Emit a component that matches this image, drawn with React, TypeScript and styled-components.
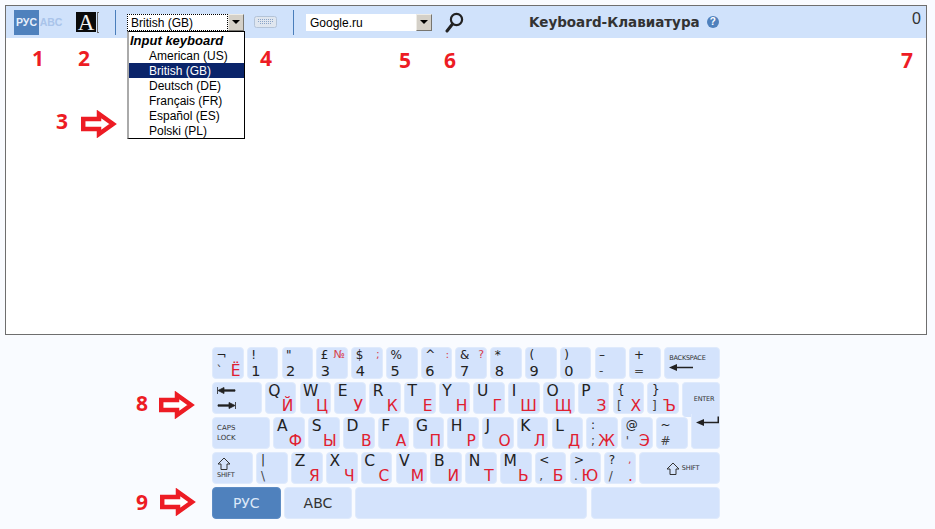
import React from "react";
import styled, { createGlobalStyle } from "styled-components";

const GlobalStyle = createGlobalStyle`
  html, body {
    margin: 0;
    padding: 0;
    background: #f9fbff;
    font-family: "Liberation Sans", Arial, sans-serif;
  }
`;

const Page = styled.div`
  position: relative;
  width: 935px;
  height: 529px;
  overflow: hidden;
  padding-top: 5px;
  box-sizing: border-box;
`;

const Panel = styled.div`
  margin-left: 5px;
  width: 922px;
  height: 330px;
  box-sizing: border-box;
  background: #fff;
  border: 1px solid #6e6e6e;
`;

const Toolbar = styled.div`
  display: flex;
  align-items: center;
  height: 32px;
  background: #d0e2fb;
  padding-left: 8px;
`;

const LangOn = styled.div`
  width: 25px;
  height: 25px;
  background: #4f81bd;
  color: #e8f0fb;
  font-size: 10.5px;
  font-weight: bold;
  display: flex;
  align-items: center;
  justify-content: center;
`;

const LangOff = styled.div`
  width: 24px;
  color: #a9c4ea;
  font-size: 10.5px;
  font-weight: bold;
  text-align: center;
`;

const FontIcon = styled.div`
  position: relative;
  flex: none;
  width: 20px;
  height: 20px;
  margin: 0 3px 0 13px;
  background: #0a0a0a;
  color: #f2f2f2;
  font-family: "Liberation Serif", serif;
  font-size: 23px;
  line-height: 22px;
  text-align: center;

  &::after {
    content: "";
    position: absolute;
    right: -3px;
    top: 0;
    width: 1px;
    height: 19px;
    border: 1px solid #666;
    border-right: none;
  }
`;

const Separator = styled.div<{ $left: number }>`
  width: 1px;
  height: 25px;
  background: #4a7ebb;
  margin-left: ${(p) => p.$left}px;
`;

const Select = styled.div<{ $width: number; $left: number }>`
  position: relative;
  display: flex;
  width: ${(p) => p.$width}px;
  height: 17px;
  margin-left: ${(p) => p.$left}px;
  background: #fff;
  font-size: 12px;
  color: #000;
`;

const SelectValue = styled.div<{ $focus?: boolean }>`
  flex: 1;
  box-sizing: border-box;
  line-height: 16px;
  padding-left: 3px;
  border: 1px dotted ${(p) => (p.$focus ? "#000" : "transparent")};
`;

const SelectArrow = styled.div`
  width: 16px;
  box-sizing: border-box;
  background: #d4d0c8;
  border-style: solid;
  border-width: 1px;
  border-color: #eeece6 #77756f #77756f #eeece6;
  display: flex;
  align-items: center;
  justify-content: center;

  &::before {
    content: "";
    border-style: solid;
    border-width: 4px 4px 0;
    border-color: #000 transparent transparent;
  }
`;

const Menu = styled.div`
  position: absolute;
  top: 17px;
  left: 0;
  width: 118px;
  box-sizing: border-box;
  background: #fff;
  border: 1px solid #000;
  border-left: 2px solid #aaa;
  padding-top: 1px;
  z-index: 2;
`;

const MenuHeader = styled.div`
  height: 15px;
  line-height: 15px;
  font-size: 13px;
  font-weight: bold;
  font-style: italic;
  padding-left: 1px;
`;

const MenuItem = styled.div<{ $active?: boolean }>`
  height: 15px;
  line-height: 17px;
  padding-left: 20px;
  color: ${(p) => (p.$active ? "#fff" : "#000")};
  background: ${(p) => (p.$active ? "#0a246a" : "transparent")};
`;

const KeyboardIcon = styled.svg`
  margin-left: 10px;
  flex: none;
`;

const SearchIcon = styled.svg`
  margin-left: 13px;
  flex: none;
`;

const Title = styled.div`
  margin-left: 65px;
  font-family: "DejaVu Sans", Verdana, sans-serif;
  font-size: 13.5px;
  font-weight: bold;
  color: #333;
  white-space: nowrap;
`;

const Help = styled.div`
  width: 12px;
  height: 12px;
  margin-left: 7px;
  border-radius: 50%;
  background: #4f81bd;
  color: #fff;
  font-size: 10px;
  font-weight: bold;
  line-height: 12px;
  text-align: center;
`;

const Counter = styled.div`
  margin-left: auto;
  margin-right: 5px;
  margin-top: -6px;
  font-size: 16px;
  color: #333;
`;

const Keyboard = styled.div`
  display: flex;
  flex-direction: column;
  gap: 3.2px;
  width: 508px;
  margin: 12.3px 0 0 212px;
  font-family: "DejaVu Sans", Verdana, sans-serif;
`;

const Row = styled.div`
  display: flex;
  gap: 3.2px;
  height: 31.8px;
`;

const KeyBase = styled.div<{ $width?: number }>`
  box-sizing: border-box;
  flex: ${(p) => (p.$width ? `0 0 ${p.$width}px` : "1 1 0")};
  min-width: 0;
  background: #d4e3fc;
  border: 1px solid #dfeafc;
  border-radius: 4px;
`;

const CharKey = styled(KeyBase)`
  display: grid;
  grid-template-columns: minmax(0, 1fr) auto;
  grid-template-rows: 14.5px 15.5px;
  padding: 1px 2px 0 2.5px;
`;

const Upper = styled.span<{ $big?: boolean }>`
  font-size: ${(p) => (p.$big ? 15.5 : 12)}px;
  line-height: ${(p) => (p.$big ? 14 : 12)}px;
  padding-left: ${(p) => (p.$big ? 0 : 1)}px;
  color: #222;
`;

const Lower = styled.span<{ $digit?: boolean }>`
  grid-column: 1;
  grid-row: 2;
  font-size: ${(p) => (p.$digit ? 14.5 : 12)}px;
  line-height: 15px;
  padding-left: 1px;
  color: ${(p) => (p.$digit ? "#222" : "#444")};
`;

const RedTop = styled.span`
  grid-column: 2;
  grid-row: 1;
  font-size: 11px;
  line-height: 12px;
  color: #d8404c;
`;

const RedBottom = styled.span`
  grid-column: 2;
  grid-row: 2;
  font-size: 15.5px;
  line-height: 15px;
  color: #e02030;
`;

const FuncKey = styled(KeyBase)<{ $row?: boolean }>`
  display: flex;
  flex-direction: ${(p) => (p.$row ? "row" : "column")};
  align-items: ${(p) => (p.$row ? "center" : "flex-start")};
  justify-content: center;
  padding-left: ${(p) => (p.$row ? 6 : 4)}px;
  font-size: 6.5px;
  letter-spacing: -0.2px;
  color: #333;
  gap: ${(p) => (p.$row ? 2 : 1)}px;
`;

const CapsKey = styled(KeyBase)`
  padding: 5px 0 0 4px;
  font-size: 7px;
  line-height: 10px;
  color: #333;
`;

const EnterTop = styled(KeyBase)`
  border-bottom: none;
  border-radius: 4px 4px 0 4px;
  font-size: 6.5px;
  letter-spacing: -0.2px;
  color: #333;
  text-align: center;
  padding: 12px 0 0 6px;
  height: 35px;
  position: relative;
  z-index: 1;
`;

const EnterBottom = styled(KeyBase)`
  border-top: none;
  border-radius: 0 0 4px 4px;
  margin-top: -3.2px;
  height: 35px;
  padding: 1.5px 0 0 4px;
  position: relative;
  z-index: 1;

  svg {
    display: block;
  }
`;

const LangKey = styled(KeyBase)<{ $active?: boolean }>`
  display: flex;
  align-items: center;
  justify-content: center;
  font-size: 14px;
  background: ${(p) => (p.$active ? "#4f81bd" : "#d4e3fc")};
  border-color: ${(p) => (p.$active ? "#5d8cc4" : "#dfeafc")};
  color: ${(p) => (p.$active ? "#dce8f8" : "#333")};
`;

const Marker = styled.div<{ $x: number; $y: number }>`
  position: absolute;
  left: ${(p) => p.$x}px;
  top: ${(p) => p.$y}px;
  transform: translate(-50%, -50%);
  font-family: "Open Sans", sans-serif;
  font-size: 21px;
  font-weight: 700;
  line-height: 1;
  color: #ed1c24;
  z-index: 3;
`;

const ArrowMark = styled.svg<{ $x: number; $y: number }>`
  position: absolute;
  left: ${(p) => p.$x}px;
  top: ${(p) => p.$y}px;
  z-index: 3;
`;

type CharDef = { up: string; low?: string; red?: string; redTop?: string; big?: boolean };

const letter = (up: string, red: string): CharDef => ({ up, red, big: true });

const row1: CharDef[] = [
  { up: "¬", low: "`", red: "Ё" },
  { up: "!", low: "1" },
  { up: '"', low: "2" },
  { up: "£", low: "3", redTop: "№" },
  { up: "$", low: "4", redTop: ";" },
  { up: "%", low: "5" },
  { up: "^", low: "6", redTop: ":" },
  { up: "&", low: "7", redTop: "?" },
  { up: "*", low: "8" },
  { up: "(", low: "9" },
  { up: ")", low: "0" },
  { up: "–", low: "-" },
  { up: "+", low: "=" },
];

const row2: CharDef[] = [
  letter("Q", "Й"), letter("W", "Ц"), letter("E", "У"), letter("R", "К"),
  letter("T", "Е"), letter("Y", "Н"), letter("U", "Г"), letter("I", "Ш"),
  letter("O", "Щ"), letter("P", "З"),
  { up: "{", low: "[", red: "Х" },
  { up: "}", low: "]", red: "Ъ" },
];

const row3: CharDef[] = [
  letter("A", "Ф"), letter("S", "Ы"), letter("D", "В"), letter("F", "А"),
  letter("G", "П"), letter("H", "Р"), letter("J", "О"), letter("K", "Л"),
  letter("L", "Д"),
  { up: ":", low: ";", red: "Ж" },
  { up: "@", low: "'", red: "Э" },
  { up: "~", low: "#" },
];

const row4: CharDef[] = [
  { up: "|", low: "\\" },
  letter("Z", "Я"), letter("X", "Ч"), letter("C", "С"), letter("V", "М"),
  letter("B", "И"), letter("N", "Т"), letter("M", "Ь"),
  { up: "<", low: ",", red: "Б" },
  { up: ">", low: ".", red: "Ю" },
  { up: "?", low: "/", redTop: ",", red: "." },
];

const CharKeys = ({ keys }: { keys: CharDef[] }) => (
  <>
    {keys.map((k) => (
      <CharKey key={k.up} $width={31.6}>
        <Upper $big={k.big}>{k.up}</Upper>
        {k.low && <Lower $digit={/\d/.test(k.low)}>{k.low}</Lower>}
        {k.redTop && <RedTop>{k.redTop}</RedTop>}
        {k.red && <RedBottom>{k.red}</RedBottom>}
      </CharKey>
    ))}
  </>
);

const ShiftArrow = () => (
  <svg width="14" height="13" viewBox="0 0 14 13">
    <path d="M7 1 L13 7 H10 V12.5 H4 V7 H1 Z" fill="none" stroke="#333" strokeWidth="1" />
  </svg>
);

const LeftArrow = ({ width }: { width: number }) => (
  <svg width={width} height="9" viewBox={`0 0 ${width} 9`}>
    <path d={`M0 4.5 L8 1 V3.7 H${width} V5.3 H8 V8 Z`} fill="#222" />
  </svg>
);

const RedArrow = ({ x, y }: { x: number; y: number }) => (
  <ArrowMark $x={x} $y={y} width="38" height="28" viewBox="0 0 38 28">
    <path
      d="M2.2 9 H18 V4 L32 14 L18 24 V19 H2.2 Z"
      fill="#fff"
      stroke="#ed1c24"
      strokeWidth="4.5"
      strokeLinejoin="miter"
    />
  </ArrowMark>
);

export default function App() {
  return (
    <Page>
      <GlobalStyle />
      <Panel>
        <Toolbar>
          <LangOn>РУС</LangOn>
          <LangOff>ABC</LangOff>
          <FontIcon>A</FontIcon>
          <Separator $left={16} />
          <Select $width={117} $left={11}>
            <SelectValue $focus>British (GB)</SelectValue>
            <SelectArrow />
            <Menu>
              <MenuHeader>Input keyboard</MenuHeader>
              <MenuItem>American (US)</MenuItem>
              <MenuItem $active>British (GB)</MenuItem>
              <MenuItem>Deutsch (DE)</MenuItem>
              <MenuItem>Français (FR)</MenuItem>
              <MenuItem>Español (ES)</MenuItem>
              <MenuItem>Polski (PL)</MenuItem>
            </Menu>
          </Select>
          <KeyboardIcon width="23" height="12" viewBox="0 0 23 12">
            <rect x="0.5" y="0.5" width="22" height="11" rx="2" fill="#dfe6ef" stroke="#b4c4d8" />
            <path d="M4 3.5 H19 M4 5.5 H19 M6 7.5 H17" stroke="#8aa4c8" strokeWidth="1" strokeDasharray="1 1" />
          </KeyboardIcon>
          <Separator $left={16} />
          <Select $width={126} $left={12}>
            <SelectValue>Google.ru</SelectValue>
            <SelectArrow />
          </Select>
          <SearchIcon width="19" height="21" viewBox="0 0 19 21">
            <circle cx="11.5" cy="7.5" r="5.6" fill="none" stroke="#222" strokeWidth="2.2" />
            <path d="M7.5 12 L2 19" stroke="#222" strokeWidth="3" strokeLinecap="round" />
          </SearchIcon>
          <Title>Keyboard-Клавиатура</Title>
          <Help>?</Help>
          <Counter>0</Counter>
        </Toolbar>
      </Panel>

      <Keyboard>
        <Row>
          <CharKeys keys={row1} />
          <FuncKey>
            <span>BACKSPACE</span>
            <LeftArrow width={24} />
          </FuncKey>
        </Row>
        <Row>
          <FuncKey $width={49.6}>
            <svg width="19" height="24" viewBox="0 0 19 24">
              <path d="M0.5 1 V8 M1 4.5 L7 1.5 V3.8 H18 V5.2 H7 V7.5 Z" stroke="#222" strokeWidth="0.8" fill="#222" />
              <path d="M18.5 16 V23 M18 19.5 L12 16.5 V18.8 H1 V20.2 H12 V22.5 Z" stroke="#222" strokeWidth="0.8" fill="#222" />
            </svg>
          </FuncKey>
          <CharKeys keys={row2} />
          <EnterTop>ENTER</EnterTop>
        </Row>
        <Row>
          <CapsKey $width={58.2}>
            CAPS
            <br />
            LOCK
          </CapsKey>
          <CharKeys keys={row3} />
          <EnterBottom>
            <svg width="23" height="10" viewBox="0 0 23 10">
              <path d="M0 6.5 L8 3 V5.7 H21.5 V0.5 H23 V7.3 H8 V10 Z" fill="#222" />
            </svg>
          </EnterBottom>
        </Row>
        <Row>
          <FuncKey $width={41.3}>
            <ShiftArrow />
            <span>SHIFT</span>
          </FuncKey>
          <CharKeys keys={row4} />
          <FuncKey $row>
            <ShiftArrow />
            <span>SHIFT</span>
          </FuncKey>
        </Row>
        <Row>
          <LangKey $width={68.5} $active>РУС</LangKey>
          <LangKey $width={68.5}>ABC</LangKey>
          <LangKey $width={232} />
          <LangKey />
        </Row>
      </Keyboard>

      <Marker $x={38} $y={58}>1</Marker>
      <Marker $x={84} $y={58}>2</Marker>
      <Marker $x={62} $y={121}>3</Marker>
      <Marker $x={266} $y={58}>4</Marker>
      <Marker $x={405} $y={60}>5</Marker>
      <Marker $x={450} $y={60}>6</Marker>
      <Marker $x={907} $y={60}>7</Marker>
      <Marker $x={142} $y={403}>8</Marker>
      <Marker $x={142} $y={502}>9</Marker>
      <RedArrow x={81} y={110} />
      <RedArrow x={159} y={391} />
      <RedArrow x={160} y={488} />
    </Page>
  );
}
